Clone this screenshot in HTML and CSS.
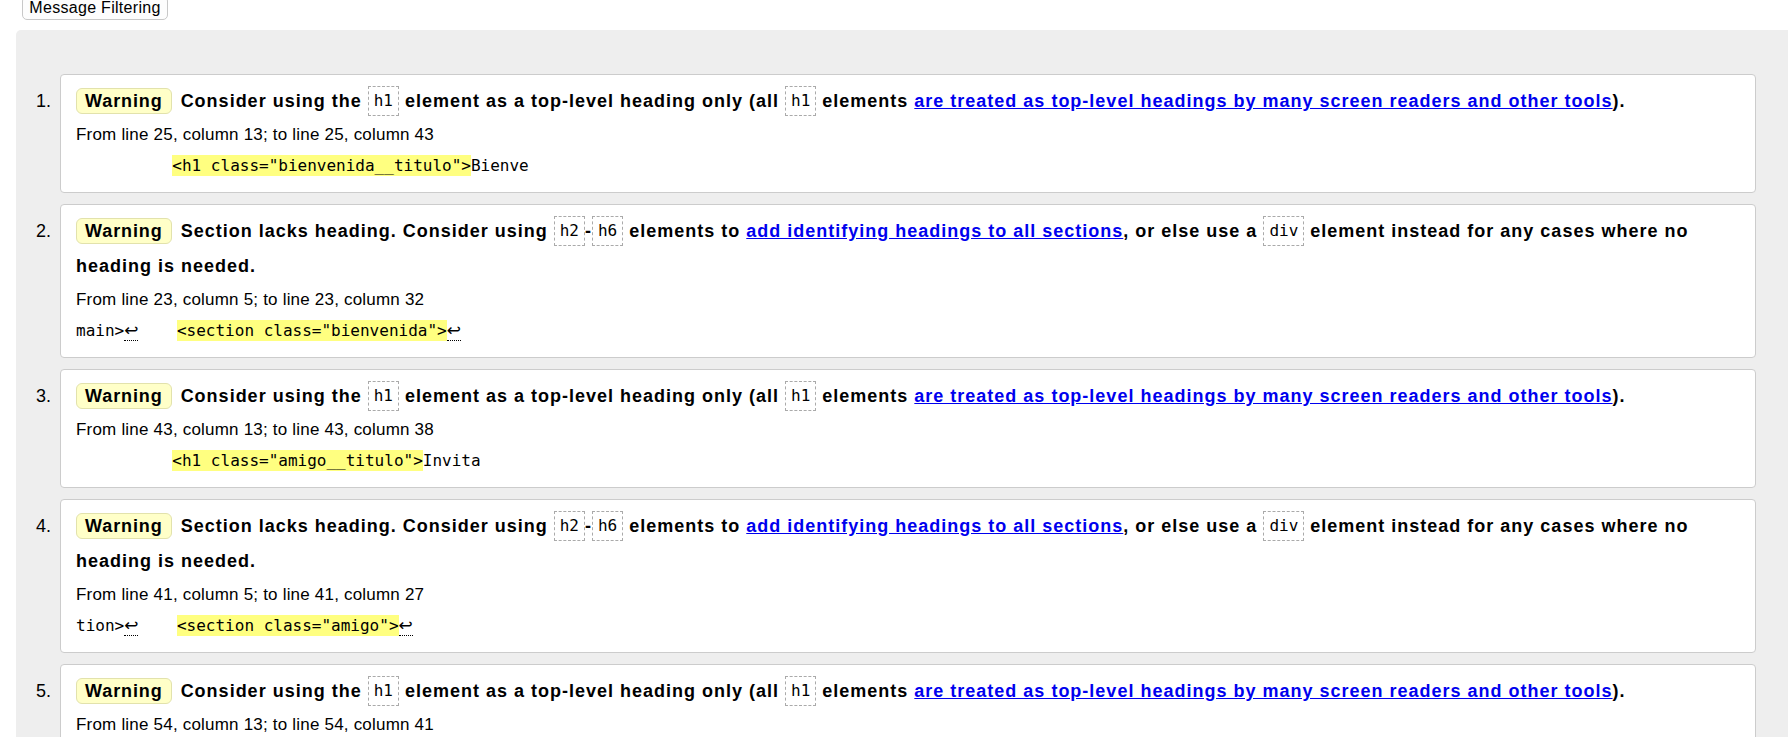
FILE: index.html
```html
<!DOCTYPE html>
<html lang="en">
<head>
<meta charset="utf-8">
<title>Nu Html Checker results</title>
<link rel="stylesheet" href="styles.css">
</head>
<body>
<div class="toolbar">
  <button class="filter-btn" type="button">Message Filtering</button>
</div>
<div class="results">
  <ol class="messages">
    <li class="msg">
      <span class="num">1.</span>
      <div class="card">
        <p class="text"><strong class="badge">Warning</strong>Consider using the <code class="tag">h1</code> element as a top-level heading only (all <code class="tag">h1</code> elements <a href="#">are treated as top-level headings by many screen readers and other tools</a>).</p>
        <p class="location">From line 25, column 13; to line 25, column 43</p>
        <p class="extract"><code>          <mark>&lt;h1 class="bienvenida__titulo"&gt;</mark>Bienve</code></p>
      </div>
    </li>
    <li class="msg">
      <span class="num">2.</span>
      <div class="card">
        <p class="text"><strong class="badge">Warning</strong>Section lacks heading. Consider using <code class="tag">h2</code>-<code class="tag">h6</code> elements to <a href="#">add identifying headings to all sections</a>, or else use a <code class="tag">div</code> element instead for any cases where no heading is needed.</p>
        <p class="location">From line 23, column 5; to line 23, column 32</p>
        <p class="extract"><code>main&gt;<b class="lf" title="U+000A">↩</b>    <mark>&lt;section class="bienvenida"&gt;</mark><b class="lf" title="U+000A">↩</b></code></p>
      </div>
    </li>
    <li class="msg">
      <span class="num">3.</span>
      <div class="card">
        <p class="text"><strong class="badge">Warning</strong>Consider using the <code class="tag">h1</code> element as a top-level heading only (all <code class="tag">h1</code> elements <a href="#">are treated as top-level headings by many screen readers and other tools</a>).</p>
        <p class="location">From line 43, column 13; to line 43, column 38</p>
        <p class="extract"><code>          <mark>&lt;h1 class="amigo__titulo"&gt;</mark>Invita</code></p>
      </div>
    </li>
    <li class="msg">
      <span class="num">4.</span>
      <div class="card">
        <p class="text"><strong class="badge">Warning</strong>Section lacks heading. Consider using <code class="tag">h2</code>-<code class="tag">h6</code> elements to <a href="#">add identifying headings to all sections</a>, or else use a <code class="tag">div</code> element instead for any cases where no heading is needed.</p>
        <p class="location">From line 41, column 5; to line 41, column 27</p>
        <p class="extract"><code>tion&gt;<b class="lf" title="U+000A">↩</b>    <mark>&lt;section class="amigo"&gt;</mark><b class="lf" title="U+000A">↩</b></code></p>
      </div>
    </li>
    <li class="msg">
      <span class="num">5.</span>
      <div class="card">
        <p class="text"><strong class="badge">Warning</strong>Consider using the <code class="tag">h1</code> element as a top-level heading only (all <code class="tag">h1</code> elements <a href="#">are treated as top-level headings by many screen readers and other tools</a>).</p>
        <p class="location">From line 54, column 13; to line 54, column 41</p>
        <p class="extract"><code>          <mark>&lt;h1 class="contacto__titulo"&gt;</mark>Contac</code></p>
      </div>
    </li>
  </ol>
</div>
</body>
</html>
```

FILE: styles.css
```css
html, body {
  margin: 0;
  padding: 0;
  background: #ffffff;
}

body {
  font-family: "Liberation Sans", Arial, sans-serif;
  color: #000;
  overflow: hidden;
}

.toolbar {
  margin-top: -4px;
  padding-left: 22px;
  height: 24px;
}

.filter-btn {
  height: 24px;
  width: 146px;
  padding: 0 6px;
  font-family: "Liberation Sans", Arial, sans-serif;
  font-size: 16px;
  letter-spacing: 0.3px;
  line-height: 22px;
  color: #000;
  background: #fdfdfd;
  border: 1px solid #c8c8c8;
  border-radius: 5px;
}

.results {
  margin-top: 10px;
  margin-left: 16px;
  background: #eeeeee;
  border-top-left-radius: 5px;
  padding-top: 44px;
  min-height: 800px;
}

.messages {
  list-style: none;
  margin: 0;
  padding: 0 32px 0 0;
}

.msg {
  display: flex;
  align-items: flex-start;
  margin-bottom: 11px;
}

.num {
  flex: 0 0 44px;
  box-sizing: border-box;
  padding-right: 9px;
  padding-top: 10px;
  text-align: right;
  font-size: 18px;
  line-height: 35px;
}

.card {
  flex: 1 1 auto;
  background: #ffffff;
  border: 1px solid #cccccc;
  border-radius: 4px;
  padding: 9px 15px 11px 15px;
}

.text {
  margin: 0;
  font-size: 18px;
  letter-spacing: 1px;
  font-weight: bold;
  line-height: 35px;
}

.badge {
  display: inline-block;
  vertical-align: middle;
  margin-top: -3px;
  margin-right: 9px;
  padding: 0 8px;
  height: 24px;
  line-height: 24px;
  font-size: 18px;
  letter-spacing: 0.9px;
  background: #ffffc8;
  border: 1px solid #e2e2ac;
  border-radius: 6px;
}

.tag {
  display: inline-block;
  vertical-align: middle;
  margin-top: -3px;
  padding: 4px 5px;
  line-height: 20px;
  font-family: "DejaVu Sans Mono", "Liberation Mono", monospace;
  font-size: 16px;
  letter-spacing: 0;
  font-weight: normal;
  border: 1px dashed #aaaaaa;
}

.text a {
  color: #0000ee;
  text-decoration: underline;
}

.location {
  margin: 0;
  font-size: 17px;
  letter-spacing: 0.2px;
  line-height: 32px;
}

.extract {
  margin: 0;
  height: 30px;
  line-height: 30px;
  white-space: pre;
}

.extract code {
  font-family: "DejaVu Sans Mono", "Liberation Mono", monospace;
  font-size: 16px;
}

.extract mark {
  background: #ffff80;
  color: #000;
  padding: 1px 0;
}

.lf {
  font-family: "DejaVu Sans", sans-serif;
  font-size: 17px;
  line-height: 16px;
  font-weight: normal;
  border-bottom: 1px dotted #000;
}
```
